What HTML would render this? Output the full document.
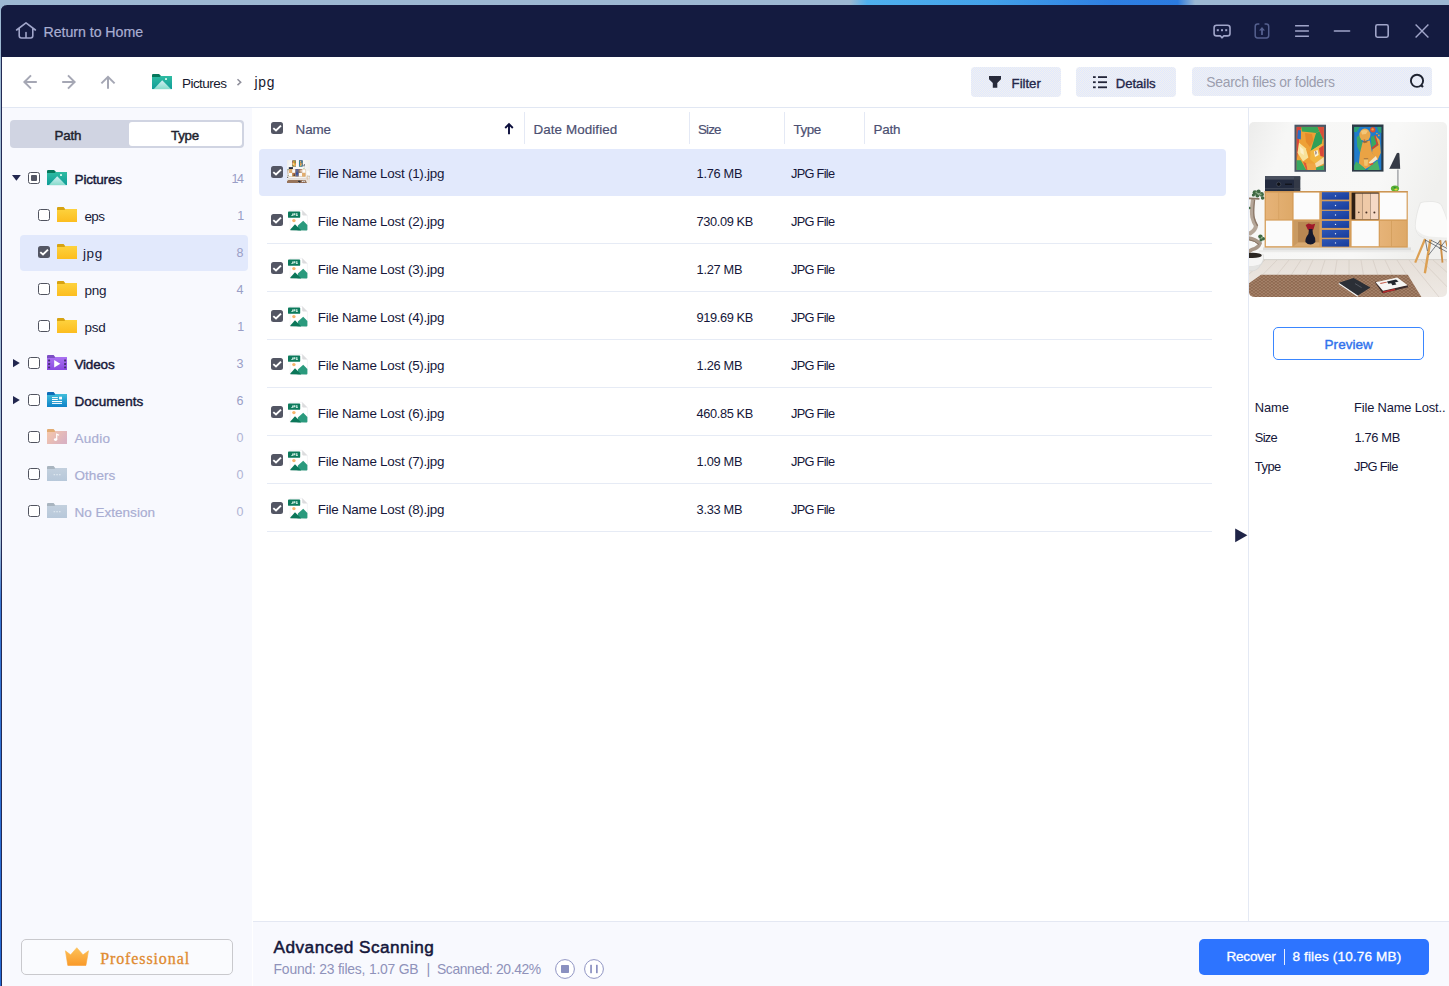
<!DOCTYPE html>
<html lang="en"><head><meta charset="utf-8"><title>Data Recovery - Pictures / jpg</title>
<style>
html,body{margin:0;padding:0}
body{width:1449px;height:986px;overflow:hidden;position:relative;background:#fff;font-family:"Liberation Sans",sans-serif;}
.a{position:absolute}
.t{position:absolute;white-space:pre;line-height:1;font-family:"Liberation Sans",sans-serif}
svg{position:absolute;overflow:visible}
.wall{left:0;top:0;width:1449px;height:986px;background:linear-gradient(180deg,#9cb8d2 0,#a3bdd6 540px,#3a78d4 600px,#2268d6 986px)}
.wallblue{left:850px;top:0;width:345px;height:5px;background:linear-gradient(90deg,#9cb8d2 0,#4fb0ee 5%,#43a2ea 40%,#2e7fe2 75%,#2b7be0 95%,#9cb8d2 100%)}
.win{left:1px;top:5px;width:1448px;height:981px;background:#fff;border-left:1px solid #232a55;border-top-left-radius:6px;overflow:hidden;box-sizing:border-box}
.titlebar{left:1px;top:5px;width:1448px;height:52px;background:#141b40;border-top-left-radius:6px}
.toolbar{left:2px;top:57px;width:1447px;height:50px;background:#fff;border-bottom:1px solid #e1e7f3}
.sidebar{left:2px;top:108px;width:250px;height:878px;background:#f8f9fe}
.main{left:252px;top:108px;width:996px;height:813px;background:#fff}
.preview{left:1248px;top:108px;width:201px;height:813px;background:#fff;border-left:1px solid #e4e9f4;box-sizing:border-box}
.footer{left:253px;top:921px;width:1196px;height:65px;background:#f8f9fe;border-top:1px solid #e4e8f3;box-sizing:border-box}
.btn{background:#e9edf8 conic-gradient(#dfe8ff 25%,#f2f1ef 0 50%,#dfe8ff 0 75%,#f2f1ef 0) 0 0/2px 2px;border-radius:4px}
.sel{background:#e2e9fc;border-radius:4px}
.sep{background:#e6ebf5;height:1px}
.colsep{background:#e4e9f5;width:1px}
.cb{width:12px;height:12px;box-sizing:border-box;border-radius:2.5px}
.cb0{border:1.5px solid #50535f;background:#fff}
.cb1{background:#535664}
</style></head><body>
<div class="a wall"></div><div class="a wallblue"></div>
<div class="a win"></div>
<header><div class="a titlebar"></div>
<svg style="left:0px;top:0px" width="60" height="57" viewBox="0 0 60 57" ><path fill="none" stroke="#a0a5c9" stroke-width="1.6" stroke-linejoin="round" stroke-linecap="round" d="M16.6 30 L26 22.8 L35.4 30 M19.2 28.6 V35.8 a2.2 2.2 0 0 0 2.2 2.2 H30.6 a2.2 2.2 0 0 0 2.2-2.2 V28.6 M26 32.6 V38"/></svg><span class="t" style="left:43.60px;top:25.18px;font-size:14.2px;color:#a9aed2;letter-spacing:-0.054px;-webkit-text-stroke:0.2px #a9aed2;">Return to Home</span><svg style="left:0px;top:0px" width="1449" height="57" viewBox="0 0 1449 57" ><path fill="none" stroke="#a0a5c9" stroke-width="1.6" stroke-linejoin="round" stroke-linecap="round" d="M1216.6 25.2 H1227.5 a2.5 2.5 0 0 1 2.5 2.5 V33.4 a2.5 2.5 0 0 1 -2.5 2.5 H1223.8 l-1.75 1.9 l-1.75-1.9 H1216.6 a2.5 2.5 0 0 1 -2.5-2.5 V27.7 a2.5 2.5 0 0 1 2.5-2.5z"/><g fill="#a0a5c9"><rect x="1216.8" y="29.2" width="2" height="2"/><rect x="1221" y="29.2" width="2" height="2"/><rect x="1225.2" y="29.2" width="2" height="2"/></g><path fill="none" stroke="#55608f" stroke-width="1.5" stroke-linecap="round" stroke-linejoin="round" d="M1258.8 24 H1257.6 a2.4 2.4 0 0 0 -2.4 2.4 V35.5 a2.4 2.4 0 0 0 2.4 2.4 H1266.3 a2.4 2.4 0 0 0 2.4-2.4 V26.4 a2.4 2.4 0 0 0 -2.4-2.4 H1265.1"/><path fill="#55608f" d="M1262 27 l3 3.4 h-2.1 v4.6 h-1.8 v-4.6 h-2.1 z"/><path fill="none" stroke="#a0a5c9" stroke-width="1.6" d="M1295.1 25.8 h13.8 M1295.1 31 h13.8 M1295.1 36.2 h13.8"/><path fill="none" stroke="#a0a5c9" stroke-width="1.6" stroke-linejoin="round" stroke-linecap="round" d="M1334.4 31 h15.2"/><rect fill="none" stroke="#a0a5c9" stroke-width="1.6" stroke-linejoin="round" stroke-linecap="round" x="1375.8" y="24.8" width="12.4" height="12.4" rx="1.6"/><path fill="none" stroke="#a0a5c9" stroke-width="1.4" d="M1415.6 24.6 L1428.4 37.4 M1428.4 24.6 L1415.6 37.4"/></svg></header>
<nav><div class="a toolbar"></div>
<svg style="left:0px;top:0px" width="300" height="108" viewBox="0 0 300 108" ><path fill="none" stroke="#a5a7b4" stroke-width="2" stroke-linejoin="miter" d="M36.8 82 H25 M31 75.4 L24.4 82 L31 88.6"/><path fill="none" stroke="#a5a7b4" stroke-width="2" stroke-linejoin="miter" d="M62.2 82 H74 M68 75.4 L74.6 82 L68 88.6"/><path fill="none" stroke="#a5a7b4" stroke-width="2" stroke-linejoin="miter" d="M108 88.8 V77 M101.4 83.4 L108 76.8 L114.6 83.4"/><path fill="none" stroke="#8e8e9a" stroke-width="1.5" d="M237.5 79.3 L240.7 82.2 L237.5 85.1"/></svg><svg style="left:152px;top:74px" width="20" height="15.1" viewBox="0 0 20 15.1" ><defs><linearGradient id="pfg" x1="0" y1="0" x2="0" y2="1"><stop offset="0" stop-color="#2fbca2"/><stop offset="1" stop-color="#109c98"/></linearGradient><linearGradient id="pfm" x1="0" y1="0" x2="0" y2="1"><stop offset="0" stop-color="#d4eef4"/><stop offset="1" stop-color="#86dccb"/></linearGradient></defs><rect x="0" y="2" width="20" height="13.1" fill="url(#pfg)"/><path fill="#06785c" d="M0 1.1 a1.1 1.1 0 0 1 1.1-1.1 h5.9 l1.9 1.7 v0 l-1.2 1.3 h-7.7 z"/><path fill="url(#pfm)" d="M1.9 15.1 L10.2 6.3 L18.9 15.1 z"/><rect x="13" y="4.1" width="2" height="1.9" fill="#c9f6e8"/></svg><span class="t" style="left:182.00px;top:76.57px;font-size:13.5px;color:#17182e;letter-spacing:-0.548px;">Pictures</span><span class="t" style="left:254.60px;top:76.32px;font-size:13.8px;color:#17182e;letter-spacing:0.659px;">jpg</span><div class="a btn" style="left:971px;top:67px;width:90px;height:30px"></div><svg style="left:989px;top:76px" width="12" height="12" viewBox="0 0 12 12" ><path fill="#272a3a" d="M0 0 H12 V3.2 L8.3 7 V11.7 H3.8 V7 L0 3.2 Z"/></svg><span class="t" style="left:1011.60px;top:76.83px;font-size:13.2px;color:#24274a;letter-spacing:-0.019px;-webkit-text-stroke:0.35px #24274a;">Filter</span><div class="a btn" style="left:1076px;top:67px;width:100px;height:30px"></div><svg style="left:1093px;top:75px" width="14" height="14" viewBox="0 0 14 14" ><g fill="#23263a"><rect x="0" y="1.2" width="2.7" height="1.8"/><rect x="5" y="1.2" width="9" height="1.8"/><rect x="0" y="6.3" width="2.7" height="1.8"/><rect x="5" y="6.3" width="9" height="1.8"/><rect x="0" y="11.4" width="2.7" height="1.8"/><rect x="5" y="11.4" width="9" height="1.8"/></g></svg><span class="t" style="left:1115.80px;top:76.83px;font-size:13.2px;color:#24274a;letter-spacing:-0.073px;-webkit-text-stroke:0.35px #24274a;">Details</span><div class="a btn" style="left:1192px;top:66.5px;width:240px;height:29.6px"></div><span class="t" style="left:1206.20px;top:75.53px;font-size:13.9px;color:#9c9eae;letter-spacing:-0.250px;">Search files or folders</span><svg style="left:1408px;top:72px" width="18" height="18" viewBox="0 0 18 18" ><circle cx="9" cy="8.8" r="6.1" fill="none" stroke="#1e2330" stroke-width="1.9"/><path d="M13.2 13.2 L15 15" stroke="#1e2330" stroke-width="2.2"/></svg></nav>
<aside><div class="a sidebar"></div>
<div class="a" style="left:10px;top:120px;width:234px;height:28px;background:#d0d4e2;border-radius:4px"></div><div class="a" style="left:129px;top:122px;width:113px;height:24px;background:#fff;border-radius:3px"></div><span class="t" style="left:54.40px;top:129.34px;font-size:13.3px;color:#22232e;letter-spacing:-0.090px;-webkit-text-stroke:0.45px #22232e;">Path</span><span class="t" style="left:171.00px;top:129.34px;font-size:13.3px;color:#22232e;letter-spacing:-0.207px;-webkit-text-stroke:0.45px #22232e;">Type</span><svg style="left:12.2px;top:175.4px" width="9" height="6" viewBox="0 0 9 6" ><path fill="#22274f" d="M0 0 H8.8 L4.4 5.8 z"/></svg><div class="a cb cb0" style="left:28px;top:172px"><div class="a" style="left:2px;top:2px;width:5.6px;height:5.6px;background:#535664;border-radius:1px"></div></div><svg style="left:47px;top:170.2px" width="20" height="15.1" viewBox="0 0 20 15.1" ><defs><linearGradient id="pfg" x1="0" y1="0" x2="0" y2="1"><stop offset="0" stop-color="#2fbca2"/><stop offset="1" stop-color="#109c98"/></linearGradient><linearGradient id="pfm" x1="0" y1="0" x2="0" y2="1"><stop offset="0" stop-color="#d4eef4"/><stop offset="1" stop-color="#86dccb"/></linearGradient></defs><rect x="0" y="2" width="20" height="13.1" fill="url(#pfg)"/><path fill="#06785c" d="M0 1.1 a1.1 1.1 0 0 1 1.1-1.1 h5.9 l1.9 1.7 v0 l-1.2 1.3 h-7.7 z"/><path fill="url(#pfm)" d="M1.9 15.1 L10.2 6.3 L18.9 15.1 z"/><rect x="13" y="4.1" width="2" height="1.9" fill="#c9f6e8"/></svg><span class="t" style="left:74.60px;top:172.57px;font-size:13.5px;color:#17193a;letter-spacing:-0.198px;-webkit-text-stroke:0.45px #17193a;">Pictures</span><span class="t" style="left:231.40px;top:173.12px;font-size:12.5px;color:#9a9ec6;letter-spacing:-1.453px;">14</span><div class="a cb cb0" style="left:38px;top:209px"></div><svg style="left:57px;top:207px" width="20" height="15" viewBox="0 0 20 15" ><defs><linearGradient id="fgy" x1="0" y1="0" x2="0" y2="1"><stop offset="0" stop-color="#fdd23e"/><stop offset="1" stop-color="#fcbd1f"/></linearGradient></defs><rect x="0" y="2" width="20" height="13" fill="url(#fgy)"/><path fill="#d7a312" d="M0 1 a1 1 0 0 1 1-1 h5.6 l1.6 2 l-0.6 0.9 h-7.6 z"/></svg><span class="t" style="left:84.40px;top:209.57px;font-size:13.5px;color:#17193a;letter-spacing:-0.527px;">eps</span><span class="t" style="left:237.20px;top:210.12px;font-size:12.5px;color:#9a9ec6;">1</span><div class="a sel" style="left:20px;top:235px;width:228px;height:36px"></div><div class="a cb cb1" style="left:38px;top:246px"><svg style="left:0;top:0" width="12" height="12" viewBox="0 0 12 12"><path d="M2.3 6.1 L5 8.5 L10 3.6" fill="none" stroke="#fff" stroke-width="1.9"/></svg></div><svg style="left:57px;top:244px" width="20" height="15" viewBox="0 0 20 15" ><defs><linearGradient id="fgy" x1="0" y1="0" x2="0" y2="1"><stop offset="0" stop-color="#fdd23e"/><stop offset="1" stop-color="#fcbd1f"/></linearGradient></defs><rect x="0" y="2" width="20" height="13" fill="url(#fgy)"/><path fill="#d7a312" d="M0 1 a1 1 0 0 1 1-1 h5.6 l1.6 2 l-0.6 0.9 h-7.6 z"/></svg><span class="t" style="left:83.00px;top:246.57px;font-size:13.5px;color:#17193a;letter-spacing:0.595px;">jpg</span><span class="t" style="left:236.60px;top:247.12px;font-size:12.5px;color:#9a9ec6;">8</span><div class="a cb cb0" style="left:38px;top:283px"></div><svg style="left:57px;top:281px" width="20" height="15" viewBox="0 0 20 15" ><defs><linearGradient id="fgy" x1="0" y1="0" x2="0" y2="1"><stop offset="0" stop-color="#fdd23e"/><stop offset="1" stop-color="#fcbd1f"/></linearGradient></defs><rect x="0" y="2" width="20" height="13" fill="url(#fgy)"/><path fill="#d7a312" d="M0 1 a1 1 0 0 1 1-1 h5.6 l1.6 2 l-0.6 0.9 h-7.6 z"/></svg><span class="t" style="left:84.40px;top:283.57px;font-size:13.5px;color:#17193a;letter-spacing:-0.177px;">png</span><span class="t" style="left:236.60px;top:284.12px;font-size:12.5px;color:#9a9ec6;">4</span><div class="a cb cb0" style="left:38px;top:320px"></div><svg style="left:57px;top:318px" width="20" height="15" viewBox="0 0 20 15" ><defs><linearGradient id="fgy" x1="0" y1="0" x2="0" y2="1"><stop offset="0" stop-color="#fdd23e"/><stop offset="1" stop-color="#fcbd1f"/></linearGradient></defs><rect x="0" y="2" width="20" height="13" fill="url(#fgy)"/><path fill="#d7a312" d="M0 1 a1 1 0 0 1 1-1 h5.6 l1.6 2 l-0.6 0.9 h-7.6 z"/></svg><span class="t" style="left:84.40px;top:320.57px;font-size:13.5px;color:#17193a;letter-spacing:-0.194px;">psd</span><span class="t" style="left:237.20px;top:321.12px;font-size:12.5px;color:#9a9ec6;">1</span><svg style="left:13px;top:358.9px" width="7" height="9" viewBox="0 0 7 9" ><path fill="#22274f" d="M0 0 L6.8 4.1 L0 8.2 z"/></svg><div class="a cb cb0" style="left:28px;top:357px"></div><svg style="left:47px;top:355px" width="20" height="15" viewBox="0 0 20 15" ><defs><linearGradient id="fgv" x1="0" y1="0" x2="0" y2="1"><stop offset="0" stop-color="#aa72f2"/><stop offset="1" stop-color="#8a49e0"/></linearGradient></defs><rect x="0" y="2" width="20" height="13" fill="url(#fgv)"/><path fill="#7c4ec4" d="M0 1 a1 1 0 0 1 1-1 h5.6 l1.6 2 l-0.6 0.9 h-7.6 z"/><path fill="#fff" d="M7.2 5 L13.3 8.7 L7.2 12.4 z"/><rect x="1.1" y="4.6" width="2" height="1.8" rx="0.4" fill="#44316f"/><rect x="1.1" y="8.1" width="2" height="1.8" rx="0.4" fill="#44316f"/><rect x="1.1" y="11.5" width="2" height="1.8" rx="0.4" fill="#44316f"/><rect x="17.1" y="4.6" width="2" height="1.8" rx="0.4" fill="#44316f"/><rect x="17.1" y="8.1" width="2" height="1.8" rx="0.4" fill="#44316f"/><rect x="17.1" y="11.5" width="2" height="1.8" rx="0.4" fill="#44316f"/></svg><span class="t" style="left:74.40px;top:357.57px;font-size:13.5px;color:#17193a;letter-spacing:-0.141px;-webkit-text-stroke:0.45px #17193a;">Videos</span><span class="t" style="left:236.60px;top:358.12px;font-size:12.5px;color:#9a9ec6;">3</span><svg style="left:13px;top:395.9px" width="7" height="9" viewBox="0 0 7 9" ><path fill="#22274f" d="M0 0 L6.8 4.1 L0 8.2 z"/></svg><div class="a cb cb0" style="left:28px;top:394px"></div><svg style="left:47px;top:392px" width="20" height="15" viewBox="0 0 20 15" ><defs><linearGradient id="fgd" x1="0" y1="0" x2="0" y2="1"><stop offset="0" stop-color="#40bedb"/><stop offset="1" stop-color="#0f82c8"/></linearGradient></defs><rect x="0" y="2" width="20" height="13" fill="url(#fgd)"/><path fill="#0e6cb8" d="M0 1 a1 1 0 0 1 1-1 h5.6 l1.6 2 l-0.6 0.9 h-7.6 z"/><g fill="#fff"><rect x="5" y="5.1" width="5.8" height="1"/><rect x="5" y="7" width="5.8" height="1"/><rect x="5" y="9" width="10" height="1"/><rect x="5" y="10.9" width="10" height="1"/><rect x="12.1" y="4.7" width="2.9" height="2.7"/></g></svg><span class="t" style="left:74.40px;top:394.57px;font-size:13.5px;color:#17193a;letter-spacing:0.080px;-webkit-text-stroke:0.45px #17193a;">Documents</span><span class="t" style="left:236.60px;top:395.12px;font-size:12.5px;color:#9a9ec6;">6</span><div class="a cb cb0" style="left:28px;top:431px"></div><svg style="left:47px;top:429px" width="20" height="15" viewBox="0 0 20 15" ><defs><linearGradient id="fga" x1="0" y1="0" x2="1" y2="0.6"><stop offset="0" stop-color="#f6c8aa"/><stop offset="1" stop-color="#dab2c2"/></linearGradient></defs><rect x="0" y="2" width="20" height="13" fill="url(#fga)"/><path fill="#e2ab73" d="M0 1 a1 1 0 0 1 1-1 h5.6 l1.6 2 l-0.6 0.9 h-7.6 z"/><ellipse cx="8.6" cy="10.6" rx="1.7" ry="1.4" fill="#fff"/><path d="M9.7 10.6 V5.2 l2.4 1" fill="none" stroke="#fff" stroke-width="1.2"/></svg><span class="t" style="left:74.40px;top:431.57px;font-size:13.5px;color:#a9add2;letter-spacing:0.294px;-webkit-text-stroke:0.2px #a9add2;">Audio</span><span class="t" style="left:236.60px;top:432.12px;font-size:12.5px;color:#b0b4d4;">0</span><div class="a cb cb0" style="left:28px;top:468px"></div><svg style="left:47px;top:466px" width="20" height="15" viewBox="0 0 20 15" ><defs><linearGradient id="fgo" x1="0" y1="0" x2="0" y2="1"><stop offset="0" stop-color="#c3d0de"/><stop offset="1" stop-color="#b7c8da"/></linearGradient></defs><rect x="0" y="2" width="20" height="13" fill="url(#fgo)"/><path fill="#a9b5c0" d="M0 1 a1 1 0 0 1 1-1 h5.6 l1.6 2 l-0.6 0.9 h-7.6 z"/><g fill="#dbe5ee"><rect x="6.6" y="8" width="1.5" height="1.3"/><rect x="9.3" y="8" width="1.5" height="1.3"/><rect x="12" y="8" width="1.5" height="1.3"/></g></svg><span class="t" style="left:74.40px;top:468.57px;font-size:13.5px;color:#a9add2;letter-spacing:0.081px;-webkit-text-stroke:0.2px #a9add2;">Others</span><span class="t" style="left:236.60px;top:469.12px;font-size:12.5px;color:#b0b4d4;">0</span><div class="a cb cb0" style="left:28px;top:505px"></div><svg style="left:47px;top:503px" width="20" height="15" viewBox="0 0 20 15" ><defs><linearGradient id="fgo" x1="0" y1="0" x2="0" y2="1"><stop offset="0" stop-color="#c3d0de"/><stop offset="1" stop-color="#b7c8da"/></linearGradient></defs><rect x="0" y="2" width="20" height="13" fill="url(#fgo)"/><path fill="#a9b5c0" d="M0 1 a1 1 0 0 1 1-1 h5.6 l1.6 2 l-0.6 0.9 h-7.6 z"/><g fill="#dbe5ee"><rect x="6.6" y="8" width="1.5" height="1.3"/><rect x="9.3" y="8" width="1.5" height="1.3"/><rect x="12" y="8" width="1.5" height="1.3"/></g></svg><span class="t" style="left:74.40px;top:505.57px;font-size:13.5px;color:#a9add2;letter-spacing:0.025px;-webkit-text-stroke:0.2px #a9add2;">No Extension</span><span class="t" style="left:236.60px;top:506.12px;font-size:12.5px;color:#b0b4d4;">0</span><div class="a" style="left:21px;top:939px;width:212px;height:36px;box-sizing:border-box;border:1px solid #c9c9cd;border-radius:5px;background:#fafbfe"></div><svg style="left:65px;top:947px" width="24" height="19" viewBox="0 0 24 19" ><defs><linearGradient id="crg" x1="0" y1="0" x2="0" y2="1"><stop offset="0" stop-color="#fdc25a"/><stop offset="1" stop-color="#f99a2a"/></linearGradient></defs><path fill="url(#crg)" stroke="url(#crg)" stroke-width="0.6" stroke-linejoin="round" d="M0.4 3.8 L5.6 7.8 L11.8 0.7 L18 7.8 L23.5 3.8 L20.9 18.4 H2.8 z"/></svg><span class="t" style="left:100.20px;top:950.80px;font-size:16px;color:#e08a30;font-family:'Liberation Serif',serif;letter-spacing:0.891px;-webkit-text-stroke:0.3px #e08a30;">Professional</span></aside>
<section><div class="a preview"></div>
<svg style="left:0;top:0" width="0" height="0"><symbol id="room" viewBox="0 0 198 175" preserveAspectRatio="none"><defs><linearGradient id="rwall" x1="0" y1="0" x2="1" y2="0.25"><stop offset="0" stop-color="#ececeb"/><stop offset="0.2" stop-color="#f7f7f6"/><stop offset="0.72" stop-color="#f8f8f7"/><stop offset="1" stop-color="#f0f0ee"/></linearGradient><linearGradient id="rfloor" x1="0" y1="0" x2="0" y2="1"><stop offset="0" stop-color="#e6dfd8"/><stop offset="1" stop-color="#eee9e4"/></linearGradient><linearGradient id="rblue" x1="0" y1="0" x2="1" y2="1"><stop offset="0" stop-color="#2f57b6"/><stop offset="1" stop-color="#173c9c"/></linearGradient><linearGradient id="rwood" x1="0" y1="0" x2="1" y2="0"><stop offset="0" stop-color="#e6b378"/><stop offset="1" stop-color="#dea968"/></linearGradient><pattern id="rrug" width="4" height="3" patternUnits="userSpaceOnUse"><rect width="4" height="3" fill="#98745b"/><rect width="1.8" height="1.3" fill="#a5826a"/><rect x="2" y="1.5" width="1.8" height="1.3" fill="#a8866d"/><rect x="2.1" y="0" width="1.7" height="1.3" fill="#8a664e"/><rect x="0" y="1.5" width="1.8" height="1.3" fill="#90694f"/></pattern></defs><rect width="198" height="138" fill="url(#rwall)"/><rect y="137.6" width="198" height="37.4" fill="url(#rfloor)"/><rect y="137.2" width="198" height="0.9" fill="#cfccc7"/><path d="M-20 138 L-80 175" stroke="#cfc6bd" stroke-width="0.55"/><path d="M-8 138 L-62 175" stroke="#cfc6bd" stroke-width="0.55"/><path d="M4 138 L-44 175" stroke="#cfc6bd" stroke-width="0.55"/><path d="M16 138 L-26 175" stroke="#cfc6bd" stroke-width="0.55"/><path d="M28 138 L-8 175" stroke="#cfc6bd" stroke-width="0.55"/><path d="M40 138 L10 175" stroke="#cfc6bd" stroke-width="0.55"/><path d="M52 138 L28 175" stroke="#cfc6bd" stroke-width="0.55"/><path d="M64 138 L46 175" stroke="#cfc6bd" stroke-width="0.55"/><path d="M76 138 L64 175" stroke="#cfc6bd" stroke-width="0.55"/><path d="M88 138 L82 175" stroke="#cfc6bd" stroke-width="0.55"/><path d="M100 138 L100 175" stroke="#cfc6bd" stroke-width="0.55"/><path d="M112 138 L118 175" stroke="#cfc6bd" stroke-width="0.55"/><path d="M124 138 L136 175" stroke="#cfc6bd" stroke-width="0.55"/><path d="M136 138 L154 175" stroke="#cfc6bd" stroke-width="0.55"/><path d="M148 138 L172 175" stroke="#cfc6bd" stroke-width="0.55"/><path d="M160 138 L190 175" stroke="#cfc6bd" stroke-width="0.55"/><path d="M172 138 L208 175" stroke="#cfc6bd" stroke-width="0.55"/><path d="M184 138 L226 175" stroke="#cfc6bd" stroke-width="0.55"/><path d="M196 138 L244 175" stroke="#cfc6bd" stroke-width="0.55"/><rect x="14" y="125.4" width="148" height="3" fill="#d6d6d5" opacity="0.8"/><rect x="10" y="128.2" width="155" height="2" fill="#e8e8e7" opacity="0.8"/><rect x="45.5" y="2.7" width="31.5" height="47.1" fill="#4a5766"/><rect x="47.7" y="4.9" width="27.1" height="43" fill="#eea136"/><path fill="#d8453a" d="M47.7 4.9 H52.5 L51.2 9.3 L50.1 18.6 L48.5 33 L47.7 38.3 z"/><path fill="#2a6fc4" d="M49 8.2 H52 L51.8 17.5 L48.2 16.4 z"/><path fill="#3aa658" d="M52.3 5 H68.7 L70.4 9.3 L67.1 11 L63.3 10.4 L52.9 9.6 z"/><path fill="#d94d3a" d="M68.7 5 H74.8 V17 L73.7 16.4 L70.4 9.3 z"/><path fill="#2f9f58" d="M67.1 11 L70.4 9.3 L73.7 16.4 L72.6 21.9 L61.6 29 L64.9 18 z"/><path fill="#e58a2a" d="M56 11 L63 12 L64.4 18.4 L61 25 L57 20 z"/><path fill="#f8e29a" d="M50.1 20.8 L56.7 26.3 L59.4 35.6 L54 39.4 L48.5 30.7 z"/><path fill="#fcf0c8" d="M50.6 24 L54.4 27.4 L55 33 L51.6 31 z"/><path fill="#f2b640" d="M61.6 29 L72.6 21.9 L74.8 23 V35 L66 41.6 L61.1 37.2 z"/><path fill="#fbf3d8" d="M64.9 29.4 L68.6 28 L69.6 33 L66 35 z"/><path fill="#d9483a" d="M70 26.3 L74.8 23 V35 L71.4 34 z"/><path fill="#4a3040" d="M66.6 29 q1.2 1.6 0.2 3.6" stroke="#4a3040" stroke-width="0.5" fill="none"/><path fill="#3aa860" d="M47.7 38.3 L51.8 38.3 L57.2 47.9 H47.7 z"/><path fill="#d8453a" d="M54 39.4 L57.4 41.6 L58.6 47.9 H57.2 z" opacity="0.8"/><path fill="#f0a646" d="M57.2 41.6 H66 L67.1 47.9 H58.6 z"/><path fill="#f5deb0" d="M66 41.6 L74.8 35 V41.6 L67.1 45.5 z"/><path fill="#38a860" d="M67.1 45.5 L74.8 43.3 V47.9 H67.1 z"/><rect x="103" y="2.5" width="31.5" height="47.1" fill="#2c3a46"/><rect x="105.2" y="4.9" width="27.1" height="43" fill="#1f7ccc"/><path fill="#2fa070" d="M105.2 4.9 H111 L107.7 9.9 H105.2 z"/><path fill="#2fa070" d="M127.9 4.9 H132.3 V11 L129.6 9.9 z"/><path fill="#3aa66a" d="M107.7 15.3 L111 12.6 L113.7 21.9 L111 30.7 L108.2 24.6 z"/><path fill="#38a860" d="M121.9 14.8 L125.2 13.7 L127.4 21.9 L122.5 25.7 z"/><path fill="#c84a2e" d="M125.2 13.7 L126.8 13.1 L129.6 23 L123.5 27.4 L122.5 25.7 L127.4 21.9 z"/><path fill="#eca23f" d="M126.6 13.4 L130.7 18.1 L131.8 30.7 L128.5 38.3 L123 30.7 L123.5 27.4 L129.6 23 z"/><path fill="#eaa344" d="M113.7 19.7 L120.8 18.6 L123 30.7 L126.3 34 L121.9 43.8 L116.4 47.1 L109.9 41.6 L111 30.7 z"/><ellipse cx="115.9" cy="12.8" rx="5.5" ry="6.2" fill="#e9a84c"/><path fill="#f3c678" d="M112 9 Q115 7 119 8.6 L117 12 L113 12.4 z"/><path fill="#c9402e" d="M114.6 17.6 l1.8 0.2 l-1 1.2 z"/><path fill="#6a4a30" d="M113.6 19.6 L119 18.6 L118 20.6 L115 21.2 z" opacity="0.6"/><circle cx="123.8" cy="7.7" r="2.7" fill="#d9512f"/><circle cx="123.6" cy="7.4" r="1.2" fill="#f0a040"/><circle cx="127.9" cy="11.5" r="0.8" fill="#f0a030"/><circle cx="129.8" cy="13.4" r="0.9" fill="#f0a030"/><path fill="#3fae66" d="M105.2 43.8 L107.1 39.4 L109.9 41.6 L116.4 47.1 V47.9 H105.2 z"/><path fill="#4ab266" d="M121.9 43.8 L128.5 38.3 L130.7 47.9 H118.1 z"/><path fill="#f2c46e" d="M114.8 36.7 H119.2 L118.6 43.8 H115.3 z"/><path fill="#7a5030" d="M114.8 36.4 H119.2 V37.2 H114.8 z"/><path fill="#f6e6c8" d="M119.7 40.5 L126.8 34 L128.5 37.2 L121.9 42.2 z"/><path fill="#d9512f" d="M120.4 42 L124.6 40.6 L124 42.6 L121 43.6 z"/><path fill="#353a45" d="M147.8 31.2 Q149.2 30 150.4 31.4 L151.2 47 H140.2 z"/><rect x="140.2" y="46.8" width="11.2" height="0.9" fill="#fbfbf6"/><rect x="148.6" y="47.6" width="0.7" height="17" fill="#4a4e56"/><ellipse cx="146" cy="66.5" rx="4.1" ry="2.9" fill="#5db234"/><ellipse cx="147" cy="67.6" rx="1.6" ry="1" fill="#e8d43a"/><path fill="#2d8a3a" d="M144 64.5 l3 0.5 l-1 2 z"/><rect x="16" y="54.2" width="35.2" height="14.8" fill="#222a3e"/><rect x="16" y="54.2" width="35.2" height="3.4" fill="#49505e"/><rect x="16" y="66.2" width="35.2" height="1" fill="#444a58"/><circle cx="29.7" cy="62.2" r="2.1" fill="#0e1016" stroke="#596070" stroke-width="0.5"/><rect x="36" y="61.6" width="7" height="1.3" fill="#11131a"/><rect x="45" y="55" width="6.2" height="14" fill="#3a404c" opacity="0.7"/><rect x="15.6" y="69.2" width="143.2" height="56.4" fill="#d59d59"/><rect x="15.6" y="69.2" width="143.2" height="1" fill="#c98f4d"/><rect x="16.9" y="70.6" width="26.3" height="26.8" fill="url(#rwood)"/><rect x="16.9" y="98.6" width="26.3" height="25.6" fill="#fbfbfb"/><rect x="44.6" y="70.6" width="25.7" height="26.8" fill="#fcfcfc"/><rect x="44.6" y="98.6" width="25.7" height="25.6" fill="#c99a62"/><rect x="49" y="100" width="21.3" height="20.6" fill="#b88752"/><path fill="#d7a870" d="M44.6 124.2 L49 120.6 H70.3 V124.2 z"/><path fill="#a0182a" d="M56.6 103 L59.5 101.6 L63 102.6 L66.2 101.8 L64.4 107.4 L61.6 110 L58.8 107.6 z"/><path fill="#15192e" d="M60 107 H63.4 L64 112 Q67 116 66.4 120 Q64 122.6 61.6 122.6 Q58.4 122.6 56.4 120 Q56 116 59.4 112 z"/><rect x="72.9" y="70.2" width="27.2" height="7.4" fill="url(#rblue)"/><circle cx="86.5" cy="73.9" r="0.7" fill="#e8ecf8"/><rect x="72.9" y="79.3" width="27.2" height="8.4" fill="url(#rblue)"/><circle cx="86.5" cy="83.5" r="0.7" fill="#e8ecf8"/><rect x="72.9" y="88.9" width="27.2" height="8.2" fill="url(#rblue)"/><circle cx="86.5" cy="93.0" r="0.7" fill="#e8ecf8"/><rect x="72.9" y="98.9" width="27.2" height="7.0" fill="url(#rblue)"/><circle cx="86.5" cy="102.4" r="0.7" fill="#e8ecf8"/><rect x="72.9" y="107.9" width="27.2" height="7.8" fill="url(#rblue)"/><circle cx="86.5" cy="111.8" r="0.7" fill="#e8ecf8"/><rect x="72.9" y="117.2" width="27.2" height="7.4" fill="url(#rblue)"/><circle cx="86.5" cy="120.9" r="0.7" fill="#e8ecf8"/><rect x="102.6" y="70.6" width="27.1" height="26.8" fill="#2e1f14"/><rect x="106.3" y="71.6" width="7" height="25.6" fill="#e9c3a0"/><rect x="113.4" y="71.6" width="8" height="25.6" fill="#efcaa8"/><rect x="121.5" y="71.6" width="8" height="25.6" fill="#f5d9c6"/><circle cx="109.8" cy="90.4" r="0.8" fill="#5a4030"/><circle cx="117.4" cy="90.4" r="1" fill="#4a3428"/><circle cx="125.4" cy="90.4" r="1" fill="#4a3428"/><rect x="102.6" y="98.9" width="27.1" height="25.3" fill="#fbfbfb"/><rect x="130.9" y="70.6" width="26.7" height="26.8" fill="#fcfcfc"/><rect x="130.9" y="98.9" width="26.7" height="25.3" fill="url(#rwood)"/><rect x="142.4" y="98.9" width="0.5" height="25.3" fill="#c8924f"/><rect x="29.6" y="70.6" width="0.5" height="26.8" fill="#cf9a58"/><path fill="none" stroke="#b5a698" stroke-width="4.2" stroke-linecap="round" d="M4 78 Q2.4 88 3.4 95 Q4.6 100 7 103.6 Q6.6 108 1 111.4"/><path fill="none" stroke="#8b7767" stroke-width="1.3" d="M5.6 78 Q4.2 88 5 95 Q6.2 100 8.6 103.8"/><path fill="none" stroke="#a89788" stroke-width="3.6" stroke-linecap="round" d="M-1 116 Q6 117 11 121.4 Q9.4 126 3 127.6 Q0 129 -1 131"/><path fill="none" stroke="#86725f" stroke-width="1" d="M-1 117.6 Q6 118.6 10 122.6"/><path fill="none" stroke="#8b7565" stroke-width="1.8" d="M-1 76.4 L10.4 76.8"/><circle cx="6" cy="70.6" r="2.4" fill="#3f6843"/><circle cx="9.6" cy="69.4" r="2" fill="#3f6843"/><circle cx="12.6" cy="72.4" r="2.3" fill="#3f6843"/><circle cx="13.6" cy="76" r="1.8" fill="#3f6843"/><circle cx="8.4" cy="73.6" r="2" fill="#3f6843"/><circle cx="4.4" cy="73" r="1.6" fill="#3f6843"/><circle cx="11.4" cy="114.6" r="2.2" fill="#3f6843"/><circle cx="14.2" cy="116.8" r="1.8" fill="#3f6843"/><circle cx="12" cy="118" r="1.6" fill="#3f6843"/><circle cx="0.4" cy="86" r="1.2" fill="#3f6843"/><circle cx="7.4" cy="70.6" r="1" fill="#86ad80"/><circle cx="11.6" cy="72.6" r="1" fill="#86ad80"/><circle cx="12.8" cy="115.6" r="0.9" fill="#86ad80"/><circle cx="9.4" cy="72.4" r="0.8" fill="#86ad80"/><path fill="#d9d9d7" d="M-2 132.6 H14.8 Q15.4 140.4 11.6 143.6 Q9.4 148.4 4 149.2 H-2 z"/><path fill="#f5f5f4" d="M-2 133 H14.2 Q14.6 139.6 11 142.6 Q6 144.6 -2 144 z"/><path fill="#e3e3e1" d="M-2 144 Q6 144.6 11 142.6 Q9 147.6 4 148.4 H-2 z"/><ellipse cx="3.6" cy="133.4" rx="9.2" ry="2.7" fill="#2b2622"/><path fill="url(#rrug)" d="M12 152.7 H158.8 L172.4 175 H-2 V162.6 z"/><path fill="#f1f1f0" d="M89.6 162 L108.4 174.8 L109.4 173.6 L90 160.6 z"/><path fill="#2b2f36" d="M89.8 160.8 L104.6 156 L121.5 165.4 L108.9 173.6 z"/><path stroke="#7e838c" stroke-width="0.5" d="M106 161.6 L112.6 165.6"/><path fill="#3a2a2a" d="M126 160.6 L133.6 171.2 L159 165.2 L158.6 163 L134 168.6 L127 159.6 z"/><path fill="#b82c2c" d="M133.7 169.4 L146 166.6 L146.2 168.2 L133.9 171 z"/><path fill="#f6f5f3" d="M126.6 160.2 L148.3 155.6 L158.6 163.2 L134 168.8 z"/><path fill="#23262c" d="M138 159.4 L147 157.6 L149.6 159.6 L146 160.4 L147.4 162.4 L143.4 163.2 L142.2 161.2 L139.4 161.8 z"/><path fill="#c65a48" d="M131 161 L137.4 159.8 L138 160.6 L131.6 161.9 z"/><path fill="#dca053" d="M175 116.4 L177.2 117.2 L167.2 141 L165.2 140.2 z"/><path fill="#dca053" d="M180.2 117.2 L182.8 117.6 L177 151.6 L174.7 151.1 z"/><path fill="#cf9048" d="M190.2 117.6 L192.2 117.6 L194.4 140.6 L192.6 140.8 z"/><path fill="#cf9048" d="M195.9 118.4 L197.4 118.4 L198.6 125 L197.6 125 z"/><path fill="none" stroke="#434a55" stroke-width="0.7" d="M176 117.8 L198 130 M182 118.2 L198 126.4 M191 118.6 L179.6 133 M176.4 118.2 L178.4 129 M196.6 118.6 L190 127"/><path fill="#dededc" d="M171 80.6 Q175 78.8 184 79.2 Q191 79.6 193 83.6 Q196.6 92 198.5 99 V118.6 Q188 118.6 180 117.5 Q172.4 116.2 169.6 113.2 Q165.8 109 165.9 103.5 Q166.6 91.6 171 80.6 z" opacity="0.55"/><path fill="#fbfbfa" d="M171.8 81.2 Q175 79.6 184 80 Q190.6 80.4 192.4 84 Q196 92 198.5 100 V117.8 Q188 117.6 180.4 116.7 Q173 115.4 170.3 112.6 Q166.6 108.6 166.7 103.5 Q167.4 92 171.8 81.2 z"/><path fill="#efefed" d="M168 108 Q172 113 180.4 114.6 Q188 115.6 198.5 115.4 V117.8 Q188 117.6 180.4 116.7 Q173 115.4 170.3 112.6 Q168.6 110.6 168 108 z"/></symbol></svg><div class="a" style="left:1249px;top:122px;width:198px;height:175px;border-radius:5px;overflow:hidden"><svg style="left:0;top:0" width="198" height="175"><use href="#room" width="198" height="175"/></svg></div><div class="a" style="left:1273px;top:327px;width:151px;height:33px;box-sizing:border-box;border:1px solid #3a86ff;border-radius:5px;background:#fff"></div><span class="t" style="left:1324.60px;top:338.17px;font-size:13.5px;color:#3072ec;letter-spacing:0.026px;-webkit-text-stroke:0.4px #3072ec;">Preview</span><span class="t" style="left:1254.80px;top:401.78px;font-size:12.9px;color:#15173a;letter-spacing:-0.098px;">Name</span><span class="t" style="left:1354.00px;top:401.78px;font-size:12.9px;color:#15173a;letter-spacing:-0.154px;">File Name Lost..</span><span class="t" style="left:1254.80px;top:431.78px;font-size:12.9px;color:#15173a;letter-spacing:-0.720px;">Size</span><span class="t" style="left:1354.40px;top:431.78px;font-size:12.9px;color:#15173a;letter-spacing:-0.345px;">1.76 MB</span><span class="t" style="left:1254.80px;top:461.48px;font-size:12.9px;color:#15173a;letter-spacing:-0.488px;">Type</span><span class="t" style="left:1354.00px;top:461.48px;font-size:12.9px;color:#15173a;letter-spacing:-0.730px;">JPG File</span></section>
<main><div class="a main"></div>
<div class="a cb cb1" style="left:271px;top:122px"><svg style="left:0;top:0" width="12" height="12" viewBox="0 0 12 12"><path d="M2.3 6.1 L5 8.5 L10 3.6" fill="none" stroke="#fff" stroke-width="1.9"/></svg></div><span class="t" style="left:295.60px;top:122.66px;font-size:13.4px;color:#4c5072;letter-spacing:-0.084px;-webkit-text-stroke:0.2px #4c5072;">Name</span><svg style="left:504px;top:123.3px" width="10" height="12" viewBox="0 0 10 12" ><path fill="none" stroke="#0c0f3c" stroke-width="1.9" d="M5 11.2 V1.4 M1.2 5 L5 1.2 L8.8 5"/></svg><div class="a colsep" style="left:524px;top:112px;height:32px"></div><div class="a colsep" style="left:689px;top:112px;height:32px"></div><div class="a colsep" style="left:784px;top:112px;height:32px"></div><div class="a colsep" style="left:864px;top:112px;height:32px"></div><span class="t" style="left:533.40px;top:122.66px;font-size:13.4px;color:#4c5072;letter-spacing:0.106px;-webkit-text-stroke:0.2px #4c5072;">Date Modified</span><span class="t" style="left:698.00px;top:122.66px;font-size:13.4px;color:#4c5072;letter-spacing:-0.866px;-webkit-text-stroke:0.2px #4c5072;">Size</span><span class="t" style="left:793.60px;top:122.66px;font-size:13.4px;color:#4c5072;letter-spacing:-0.508px;-webkit-text-stroke:0.2px #4c5072;">Type</span><span class="t" style="left:873.60px;top:122.66px;font-size:13.4px;color:#4c5072;letter-spacing:-0.237px;-webkit-text-stroke:0.2px #4c5072;">Path</span><div class="a sel" style="left:259px;top:149px;width:967px;height:47px"></div><div class="a cb cb1" style="left:271px;top:166px"><svg style="left:0;top:0" width="12" height="12" viewBox="0 0 12 12"><path d="M2.3 6.1 L5 8.5 L10 3.6" fill="none" stroke="#fff" stroke-width="1.9"/></svg></div><svg style="left:287px;top:160px" width="23" height="23"><use href="#room" width="23" height="23"/></svg><span class="t" style="left:317.80px;top:166.66px;font-size:13.4px;color:#15173a;letter-spacing:-0.242px;">File Name Lost (1).jpg</span><span class="t" style="left:696.60px;top:167.96px;font-size:12.8px;color:#15173a;letter-spacing:-0.296px;">1.76 MB</span><span class="t" style="left:791.00px;top:167.96px;font-size:12.8px;color:#15173a;letter-spacing:-0.710px;">JPG File</span><div class="a cb cb1" style="left:271px;top:214px"><svg style="left:0;top:0" width="12" height="12" viewBox="0 0 12 12"><path d="M2.3 6.1 L5 8.5 L10 3.6" fill="none" stroke="#fff" stroke-width="1.9"/></svg></div><svg style="left:288.4px;top:210px" width="20" height="21" viewBox="0 0 20 21" ><path fill="#fff" stroke="#e9e9ec" stroke-width="0.5" d="M2.2 0.3 H14.2 L19.4 5.4 V19.6 a1 1 0 0 1 -1 1 H3.2 a1 1 0 0 1 -1-1 z"/><path fill="#dcdcde" d="M14.2 0.3 L19.4 5.4 H15 a0.8 0.8 0 0 1 -0.8-0.8 z"/><rect x="0" y="1.5" width="12.2" height="6.3" rx="0.9" fill="#0d7a5c"/><g fill="#dff7ee"><rect x="4" y="3.5" width="0.8" height="2.3"/><rect x="3.2" y="5.1" width="1.3" height="0.7"/><rect x="5.5" y="3.5" width="0.8" height="2.3"/><rect x="5.5" y="3.5" width="1.7" height="0.7"/><rect x="6.5" y="3.5" width="0.7" height="1.4"/><rect x="5.5" y="4.3" width="1.7" height="0.6"/><rect x="7.9" y="3.5" width="1.7" height="0.7"/><rect x="7.9" y="3.5" width="0.7" height="2.3"/><rect x="7.9" y="5.1" width="1.7" height="0.7"/><rect x="8.9" y="4.5" width="0.7" height="1.3"/></g><circle cx="5.9" cy="10.6" r="1.7" fill="#f7b46c"/><path fill="#2a9a7d" d="M9.4 20.2 L9.9 15.4 L15.2 10.8 L19.4 15 V19.4 a1 1 0 0 1 -1 1 z"/><path fill="#0b7759" d="M2.6 20.3 a1 1 0 0 1 -0.3-0.9 L7 14.2 L13.3 20.4 z"/></svg><div class="a sep" style="left:267px;top:243px;width:945px"></div><span class="t" style="left:317.80px;top:214.66px;font-size:13.4px;color:#15173a;letter-spacing:-0.242px;">File Name Lost (2).jpg</span><span class="t" style="left:696.60px;top:215.96px;font-size:12.8px;color:#15173a;letter-spacing:-0.398px;">730.09 KB</span><span class="t" style="left:791.00px;top:215.96px;font-size:12.8px;color:#15173a;letter-spacing:-0.710px;">JPG File</span><div class="a cb cb1" style="left:271px;top:262px"><svg style="left:0;top:0" width="12" height="12" viewBox="0 0 12 12"><path d="M2.3 6.1 L5 8.5 L10 3.6" fill="none" stroke="#fff" stroke-width="1.9"/></svg></div><svg style="left:288.4px;top:258px" width="20" height="21" viewBox="0 0 20 21" ><path fill="#fff" stroke="#e9e9ec" stroke-width="0.5" d="M2.2 0.3 H14.2 L19.4 5.4 V19.6 a1 1 0 0 1 -1 1 H3.2 a1 1 0 0 1 -1-1 z"/><path fill="#dcdcde" d="M14.2 0.3 L19.4 5.4 H15 a0.8 0.8 0 0 1 -0.8-0.8 z"/><rect x="0" y="1.5" width="12.2" height="6.3" rx="0.9" fill="#0d7a5c"/><g fill="#dff7ee"><rect x="4" y="3.5" width="0.8" height="2.3"/><rect x="3.2" y="5.1" width="1.3" height="0.7"/><rect x="5.5" y="3.5" width="0.8" height="2.3"/><rect x="5.5" y="3.5" width="1.7" height="0.7"/><rect x="6.5" y="3.5" width="0.7" height="1.4"/><rect x="5.5" y="4.3" width="1.7" height="0.6"/><rect x="7.9" y="3.5" width="1.7" height="0.7"/><rect x="7.9" y="3.5" width="0.7" height="2.3"/><rect x="7.9" y="5.1" width="1.7" height="0.7"/><rect x="8.9" y="4.5" width="0.7" height="1.3"/></g><circle cx="5.9" cy="10.6" r="1.7" fill="#f7b46c"/><path fill="#2a9a7d" d="M9.4 20.2 L9.9 15.4 L15.2 10.8 L19.4 15 V19.4 a1 1 0 0 1 -1 1 z"/><path fill="#0b7759" d="M2.6 20.3 a1 1 0 0 1 -0.3-0.9 L7 14.2 L13.3 20.4 z"/></svg><div class="a sep" style="left:267px;top:291px;width:945px"></div><span class="t" style="left:317.80px;top:262.66px;font-size:13.4px;color:#15173a;letter-spacing:-0.242px;">File Name Lost (3).jpg</span><span class="t" style="left:696.60px;top:263.96px;font-size:12.8px;color:#15173a;letter-spacing:-0.296px;">1.27 MB</span><span class="t" style="left:791.00px;top:263.96px;font-size:12.8px;color:#15173a;letter-spacing:-0.710px;">JPG File</span><div class="a cb cb1" style="left:271px;top:310px"><svg style="left:0;top:0" width="12" height="12" viewBox="0 0 12 12"><path d="M2.3 6.1 L5 8.5 L10 3.6" fill="none" stroke="#fff" stroke-width="1.9"/></svg></div><svg style="left:288.4px;top:306px" width="20" height="21" viewBox="0 0 20 21" ><path fill="#fff" stroke="#e9e9ec" stroke-width="0.5" d="M2.2 0.3 H14.2 L19.4 5.4 V19.6 a1 1 0 0 1 -1 1 H3.2 a1 1 0 0 1 -1-1 z"/><path fill="#dcdcde" d="M14.2 0.3 L19.4 5.4 H15 a0.8 0.8 0 0 1 -0.8-0.8 z"/><rect x="0" y="1.5" width="12.2" height="6.3" rx="0.9" fill="#0d7a5c"/><g fill="#dff7ee"><rect x="4" y="3.5" width="0.8" height="2.3"/><rect x="3.2" y="5.1" width="1.3" height="0.7"/><rect x="5.5" y="3.5" width="0.8" height="2.3"/><rect x="5.5" y="3.5" width="1.7" height="0.7"/><rect x="6.5" y="3.5" width="0.7" height="1.4"/><rect x="5.5" y="4.3" width="1.7" height="0.6"/><rect x="7.9" y="3.5" width="1.7" height="0.7"/><rect x="7.9" y="3.5" width="0.7" height="2.3"/><rect x="7.9" y="5.1" width="1.7" height="0.7"/><rect x="8.9" y="4.5" width="0.7" height="1.3"/></g><circle cx="5.9" cy="10.6" r="1.7" fill="#f7b46c"/><path fill="#2a9a7d" d="M9.4 20.2 L9.9 15.4 L15.2 10.8 L19.4 15 V19.4 a1 1 0 0 1 -1 1 z"/><path fill="#0b7759" d="M2.6 20.3 a1 1 0 0 1 -0.3-0.9 L7 14.2 L13.3 20.4 z"/></svg><div class="a sep" style="left:267px;top:339px;width:945px"></div><span class="t" style="left:317.80px;top:310.66px;font-size:13.4px;color:#15173a;letter-spacing:-0.242px;">File Name Lost (4).jpg</span><span class="t" style="left:696.60px;top:311.96px;font-size:12.8px;color:#15173a;letter-spacing:-0.398px;">919.69 KB</span><span class="t" style="left:791.00px;top:311.96px;font-size:12.8px;color:#15173a;letter-spacing:-0.710px;">JPG File</span><div class="a cb cb1" style="left:271px;top:358px"><svg style="left:0;top:0" width="12" height="12" viewBox="0 0 12 12"><path d="M2.3 6.1 L5 8.5 L10 3.6" fill="none" stroke="#fff" stroke-width="1.9"/></svg></div><svg style="left:288.4px;top:354px" width="20" height="21" viewBox="0 0 20 21" ><path fill="#fff" stroke="#e9e9ec" stroke-width="0.5" d="M2.2 0.3 H14.2 L19.4 5.4 V19.6 a1 1 0 0 1 -1 1 H3.2 a1 1 0 0 1 -1-1 z"/><path fill="#dcdcde" d="M14.2 0.3 L19.4 5.4 H15 a0.8 0.8 0 0 1 -0.8-0.8 z"/><rect x="0" y="1.5" width="12.2" height="6.3" rx="0.9" fill="#0d7a5c"/><g fill="#dff7ee"><rect x="4" y="3.5" width="0.8" height="2.3"/><rect x="3.2" y="5.1" width="1.3" height="0.7"/><rect x="5.5" y="3.5" width="0.8" height="2.3"/><rect x="5.5" y="3.5" width="1.7" height="0.7"/><rect x="6.5" y="3.5" width="0.7" height="1.4"/><rect x="5.5" y="4.3" width="1.7" height="0.6"/><rect x="7.9" y="3.5" width="1.7" height="0.7"/><rect x="7.9" y="3.5" width="0.7" height="2.3"/><rect x="7.9" y="5.1" width="1.7" height="0.7"/><rect x="8.9" y="4.5" width="0.7" height="1.3"/></g><circle cx="5.9" cy="10.6" r="1.7" fill="#f7b46c"/><path fill="#2a9a7d" d="M9.4 20.2 L9.9 15.4 L15.2 10.8 L19.4 15 V19.4 a1 1 0 0 1 -1 1 z"/><path fill="#0b7759" d="M2.6 20.3 a1 1 0 0 1 -0.3-0.9 L7 14.2 L13.3 20.4 z"/></svg><div class="a sep" style="left:267px;top:387px;width:945px"></div><span class="t" style="left:317.80px;top:358.66px;font-size:13.4px;color:#15173a;letter-spacing:-0.242px;">File Name Lost (5).jpg</span><span class="t" style="left:696.60px;top:359.96px;font-size:12.8px;color:#15173a;letter-spacing:-0.296px;">1.26 MB</span><span class="t" style="left:791.00px;top:359.96px;font-size:12.8px;color:#15173a;letter-spacing:-0.710px;">JPG File</span><div class="a cb cb1" style="left:271px;top:406px"><svg style="left:0;top:0" width="12" height="12" viewBox="0 0 12 12"><path d="M2.3 6.1 L5 8.5 L10 3.6" fill="none" stroke="#fff" stroke-width="1.9"/></svg></div><svg style="left:288.4px;top:402px" width="20" height="21" viewBox="0 0 20 21" ><path fill="#fff" stroke="#e9e9ec" stroke-width="0.5" d="M2.2 0.3 H14.2 L19.4 5.4 V19.6 a1 1 0 0 1 -1 1 H3.2 a1 1 0 0 1 -1-1 z"/><path fill="#dcdcde" d="M14.2 0.3 L19.4 5.4 H15 a0.8 0.8 0 0 1 -0.8-0.8 z"/><rect x="0" y="1.5" width="12.2" height="6.3" rx="0.9" fill="#0d7a5c"/><g fill="#dff7ee"><rect x="4" y="3.5" width="0.8" height="2.3"/><rect x="3.2" y="5.1" width="1.3" height="0.7"/><rect x="5.5" y="3.5" width="0.8" height="2.3"/><rect x="5.5" y="3.5" width="1.7" height="0.7"/><rect x="6.5" y="3.5" width="0.7" height="1.4"/><rect x="5.5" y="4.3" width="1.7" height="0.6"/><rect x="7.9" y="3.5" width="1.7" height="0.7"/><rect x="7.9" y="3.5" width="0.7" height="2.3"/><rect x="7.9" y="5.1" width="1.7" height="0.7"/><rect x="8.9" y="4.5" width="0.7" height="1.3"/></g><circle cx="5.9" cy="10.6" r="1.7" fill="#f7b46c"/><path fill="#2a9a7d" d="M9.4 20.2 L9.9 15.4 L15.2 10.8 L19.4 15 V19.4 a1 1 0 0 1 -1 1 z"/><path fill="#0b7759" d="M2.6 20.3 a1 1 0 0 1 -0.3-0.9 L7 14.2 L13.3 20.4 z"/></svg><div class="a sep" style="left:267px;top:435px;width:945px"></div><span class="t" style="left:317.80px;top:406.66px;font-size:13.4px;color:#15173a;letter-spacing:-0.242px;">File Name Lost (6).jpg</span><span class="t" style="left:696.60px;top:407.96px;font-size:12.8px;color:#15173a;letter-spacing:-0.398px;">460.85 KB</span><span class="t" style="left:791.00px;top:407.96px;font-size:12.8px;color:#15173a;letter-spacing:-0.710px;">JPG File</span><div class="a cb cb1" style="left:271px;top:454px"><svg style="left:0;top:0" width="12" height="12" viewBox="0 0 12 12"><path d="M2.3 6.1 L5 8.5 L10 3.6" fill="none" stroke="#fff" stroke-width="1.9"/></svg></div><svg style="left:288.4px;top:450px" width="20" height="21" viewBox="0 0 20 21" ><path fill="#fff" stroke="#e9e9ec" stroke-width="0.5" d="M2.2 0.3 H14.2 L19.4 5.4 V19.6 a1 1 0 0 1 -1 1 H3.2 a1 1 0 0 1 -1-1 z"/><path fill="#dcdcde" d="M14.2 0.3 L19.4 5.4 H15 a0.8 0.8 0 0 1 -0.8-0.8 z"/><rect x="0" y="1.5" width="12.2" height="6.3" rx="0.9" fill="#0d7a5c"/><g fill="#dff7ee"><rect x="4" y="3.5" width="0.8" height="2.3"/><rect x="3.2" y="5.1" width="1.3" height="0.7"/><rect x="5.5" y="3.5" width="0.8" height="2.3"/><rect x="5.5" y="3.5" width="1.7" height="0.7"/><rect x="6.5" y="3.5" width="0.7" height="1.4"/><rect x="5.5" y="4.3" width="1.7" height="0.6"/><rect x="7.9" y="3.5" width="1.7" height="0.7"/><rect x="7.9" y="3.5" width="0.7" height="2.3"/><rect x="7.9" y="5.1" width="1.7" height="0.7"/><rect x="8.9" y="4.5" width="0.7" height="1.3"/></g><circle cx="5.9" cy="10.6" r="1.7" fill="#f7b46c"/><path fill="#2a9a7d" d="M9.4 20.2 L9.9 15.4 L15.2 10.8 L19.4 15 V19.4 a1 1 0 0 1 -1 1 z"/><path fill="#0b7759" d="M2.6 20.3 a1 1 0 0 1 -0.3-0.9 L7 14.2 L13.3 20.4 z"/></svg><div class="a sep" style="left:267px;top:483px;width:945px"></div><span class="t" style="left:317.80px;top:454.66px;font-size:13.4px;color:#15173a;letter-spacing:-0.242px;">File Name Lost (7).jpg</span><span class="t" style="left:696.60px;top:455.96px;font-size:12.8px;color:#15173a;letter-spacing:-0.296px;">1.09 MB</span><span class="t" style="left:791.00px;top:455.96px;font-size:12.8px;color:#15173a;letter-spacing:-0.710px;">JPG File</span><div class="a cb cb1" style="left:271px;top:502px"><svg style="left:0;top:0" width="12" height="12" viewBox="0 0 12 12"><path d="M2.3 6.1 L5 8.5 L10 3.6" fill="none" stroke="#fff" stroke-width="1.9"/></svg></div><svg style="left:288.4px;top:498px" width="20" height="21" viewBox="0 0 20 21" ><path fill="#fff" stroke="#e9e9ec" stroke-width="0.5" d="M2.2 0.3 H14.2 L19.4 5.4 V19.6 a1 1 0 0 1 -1 1 H3.2 a1 1 0 0 1 -1-1 z"/><path fill="#dcdcde" d="M14.2 0.3 L19.4 5.4 H15 a0.8 0.8 0 0 1 -0.8-0.8 z"/><rect x="0" y="1.5" width="12.2" height="6.3" rx="0.9" fill="#0d7a5c"/><g fill="#dff7ee"><rect x="4" y="3.5" width="0.8" height="2.3"/><rect x="3.2" y="5.1" width="1.3" height="0.7"/><rect x="5.5" y="3.5" width="0.8" height="2.3"/><rect x="5.5" y="3.5" width="1.7" height="0.7"/><rect x="6.5" y="3.5" width="0.7" height="1.4"/><rect x="5.5" y="4.3" width="1.7" height="0.6"/><rect x="7.9" y="3.5" width="1.7" height="0.7"/><rect x="7.9" y="3.5" width="0.7" height="2.3"/><rect x="7.9" y="5.1" width="1.7" height="0.7"/><rect x="8.9" y="4.5" width="0.7" height="1.3"/></g><circle cx="5.9" cy="10.6" r="1.7" fill="#f7b46c"/><path fill="#2a9a7d" d="M9.4 20.2 L9.9 15.4 L15.2 10.8 L19.4 15 V19.4 a1 1 0 0 1 -1 1 z"/><path fill="#0b7759" d="M2.6 20.3 a1 1 0 0 1 -0.3-0.9 L7 14.2 L13.3 20.4 z"/></svg><div class="a sep" style="left:267px;top:531px;width:945px"></div><span class="t" style="left:317.80px;top:502.66px;font-size:13.4px;color:#15173a;letter-spacing:-0.242px;">File Name Lost (8).jpg</span><span class="t" style="left:696.60px;top:503.96px;font-size:12.8px;color:#15173a;letter-spacing:-0.296px;">3.33 MB</span><span class="t" style="left:791.00px;top:503.96px;font-size:12.8px;color:#15173a;letter-spacing:-0.710px;">JPG File</span><svg style="left:1235px;top:528px" width="13" height="15" viewBox="0 0 13 15" ><path fill="#1f2447" d="M0.2 0.4 L12.4 7.2 L0.2 14.2 z"/></svg></main>
<footer><div class="a footer"></div>
<span class="t" style="left:273.60px;top:939.14px;font-size:17.2px;color:#14163a;letter-spacing:0.464px;-webkit-text-stroke:0.5px #14163a;">Advanced Scanning</span><span class="t" style="left:273.60px;top:962.63px;font-size:13.9px;color:#8f92ba;letter-spacing:-0.209px;">Found: 23 files, 1.07 GB</span><span class="t" style="left:426.40px;top:961.81px;font-size:14.4px;color:#8f92ba;">|</span><span class="t" style="left:437.00px;top:962.63px;font-size:13.9px;color:#8f92ba;letter-spacing:-0.391px;">Scanned: 20.42%</span><svg style="left:0px;top:0px" width="700" height="986" viewBox="0 0 700 986" ><circle cx="565" cy="969" r="9.4" fill="#ffffff" stroke="#8a8fc0" stroke-width="0.95"/><rect x="561" y="965" width="8" height="8" rx="0.8" fill="#8a90c0"/><circle cx="594" cy="969" r="9.4" fill="#ffffff" stroke="#8a8fc0" stroke-width="0.95"/><rect x="590.2" y="964.8" width="1.7" height="8.4" fill="#8a90c0"/><rect x="596" y="964.8" width="1.7" height="8.4" fill="#8a90c0"/></svg><div class="a" style="left:1199px;top:939px;width:230px;height:36px;background:#2d74ff;border-radius:5px"></div><span class="t" style="left:1226.40px;top:950.49px;font-size:13.6px;color:#fff;letter-spacing:-0.204px;-webkit-text-stroke:0.3px #fff;">Recover</span><div class="a" style="left:1284px;top:949px;width:1px;height:16px;background:#e6eeff"></div><span class="t" style="left:1292.40px;top:950.49px;font-size:13.6px;color:#fff;letter-spacing:0.137px;-webkit-text-stroke:0.3px #fff;">8 files (10.76 MB)</span></footer>
</body></html>
